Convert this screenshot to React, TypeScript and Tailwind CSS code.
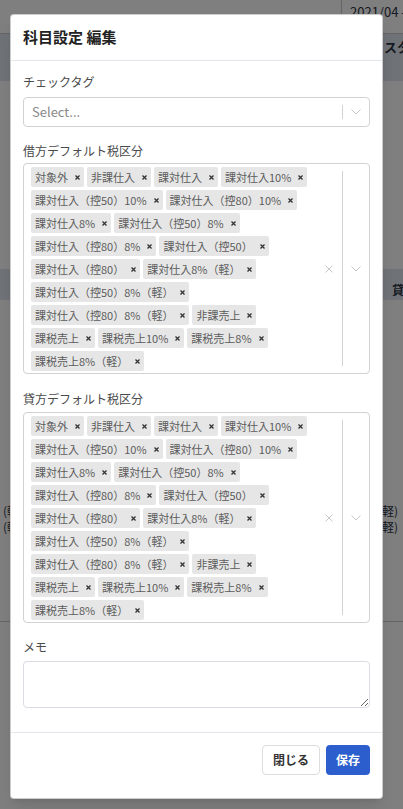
import React from "react";

const TAX_TAGS = [
  "対象外",
  "非課仕入",
  "課対仕入",
  "課対仕入10%",
  "課対仕入（控50）10%",
  "課対仕入（控80）10%",
  "課対仕入8%",
  "課対仕入（控50）8%",
  "課対仕入（控80）8%",
  "課対仕入（控50）",
  "課対仕入（控80）",
  "課対仕入8%（軽）",
  "課対仕入（控50）8%（軽）",
  "課対仕入（控80）8%（軽）",
  "非課売上",
  "課税売上",
  "課税売上10%",
  "課税売上8%",
  "課税売上8%（軽）",
];

function Chevron() {
  return (
    <svg width="10" height="6" viewBox="0 0 10 6" fill="none">
      <path d="M0.5 0.5 L5 5 L9.5 0.5" stroke="#c8c8c8" strokeWidth="1" />
    </svg>
  );
}

function ClearIcon() {
  return (
    <svg width="8" height="8" viewBox="0 0 8 8" fill="none">
      <path d="M0.5 0.5 L7.5 7.5 M7.5 0.5 L0.5 7.5" stroke="#c8c8c8" strokeWidth="1" />
    </svg>
  );
}

function TagRemove() {
  return (
    <svg width="5" height="5" viewBox="0 0 10 10" fill="none">
      <path d="M1 1 L9 9 M9 1 L1 9" stroke="#333" strokeWidth="2.6" />
    </svg>
  );
}

function Tag({ label }: { label: string }) {
  return (
    <div className="flex h-[20px] items-center rounded-[2px] bg-[#e6e6e6] pl-[4px] pr-[4px]">
      <span className="text-[11px] leading-none text-[#5c5c5c] whitespace-nowrap">{label}</span>
      <span className="ml-[7px] flex items-center">
        <TagRemove />
      </span>
    </div>
  );
}

function MultiSelect() {
  return (
    <div className="flex rounded-[4px] border border-[#d2d2d2] bg-white">
      <div className="flex flex-1 flex-wrap content-start gap-x-[3px] gap-y-[3px] pl-[7px] pr-[2px] pt-[3px] pb-[2px]">
        {TAX_TAGS.map((t) => (
          <Tag key={t} label={t} />
        ))}
      </div>
      <div className="flex w-[27px] items-center justify-center">
        <ClearIcon />
      </div>
      <div className="my-[7px] w-px bg-[#d2d2d2]" />
      <div className="flex w-[26px] items-center justify-center">
        <Chevron />
      </div>
    </div>
  );
}

function Label({ children }: { children: React.ReactNode }) {
  return <div className="text-[12px] leading-[18px] text-[#4a4a4a]">{children}</div>;
}

export default function App() {
  return (
    <div className="relative h-[809px] w-[403px] overflow-hidden bg-white font-['Noto_Sans_CJK_JP',sans-serif] text-[#2b3444]">
      {/* page behind the dialog */}
      <div className="flex h-[34px] border-b border-[#c9c9c9]">
        <div className="flex-1" />
        <div className="w-[62px] overflow-hidden border-l border-[#c9c9c9] pl-[8px] pt-[3px] text-[13px] leading-[18px] whitespace-nowrap">
          2021/04 -
        </div>
      </div>
      <div className="flex h-[47px] justify-end bg-[#dfe5ee] pt-[4px]">
        <span className="w-[19px] overflow-hidden whitespace-nowrap text-[13px] font-bold leading-[18px]">スタ</span>
      </div>
      <div className="h-[188px]" />
      <div className="flex h-[31px] items-end justify-end bg-[#dfe5ee] pb-[2px]">
        <span className="w-[11px] overflow-hidden whitespace-nowrap text-[12px] font-bold leading-[16px]">貸</span>
      </div>
      <div className="h-[203px]" />
      <div className="flex flex-col text-[12px] leading-[16px]">
        <div className="flex justify-between pl-[3px] pr-[5px]">
          <span>(軽減)</span>
          <span>課税売上8%(軽)</span>
        </div>
        <div className="flex justify-between pl-[3px] pr-[5px]">
          <span>(軽減)</span>
          <span>課税売上8%(軽)</span>
        </div>
      </div>
      <div className="h-[87px] border-b border-[#c9c9c9]" />

      {/* dialog */}
      <div className="absolute inset-0 bg-black/50 px-[10px] pt-[14px]">
        <div className="w-[373px] rounded-[4px] border border-black/20 bg-white shadow-lg">
          <div className="flex h-[46px] items-center border-b border-[#e3e6ea] px-3">
            <h2 className="text-[15px] font-bold text-[#222]">科目設定 編集</h2>
          </div>

          <div className="px-3 pt-[12px] pb-[24px]">
            <Label>チェックタグ</Label>
            <div className="mt-[6px] flex h-[30px] rounded-[4px] border border-[#d2d2d2]">
              <div className="flex flex-1 items-center pl-[8px] text-[13px] text-[#888]">Select...</div>
              <div className="my-[7px] w-px bg-[#d2d2d2]" />
              <div className="flex w-[26px] items-center justify-center">
                <Chevron />
              </div>
            </div>

            <div className="mt-[15px]">
              <Label>借方デフォルト税区分</Label>
            </div>
            <div className="mt-[3px]">
              <MultiSelect />
            </div>

            <div className="mt-[16px]">
              <Label>貸方デフォルト税区分</Label>
            </div>
            <div className="mt-[4px]">
              <MultiSelect />
            </div>

            <div className="mt-[15px]">
              <Label>メモ</Label>
            </div>
            <textarea className="mt-[5px] block h-[47px] w-full rounded-[4px] border border-[#d9dde3] outline-none" />
          </div>

          <div className="flex justify-end gap-[6px] border-t border-[#e3e6ea] px-3 pt-[12px] pb-[23px]">
            <button className="h-[30px] rounded-[4px] border border-[#dcdcdc] bg-white px-[10px] text-[12px] font-bold text-[#333]">
              閉じる
            </button>
            <button className="h-[30px] rounded-[4px] bg-[#2c5fcd] px-[10px] text-[12px] font-bold text-white">
              保存
            </button>
          </div>
        </div>
      </div>
    </div>
  );
}
